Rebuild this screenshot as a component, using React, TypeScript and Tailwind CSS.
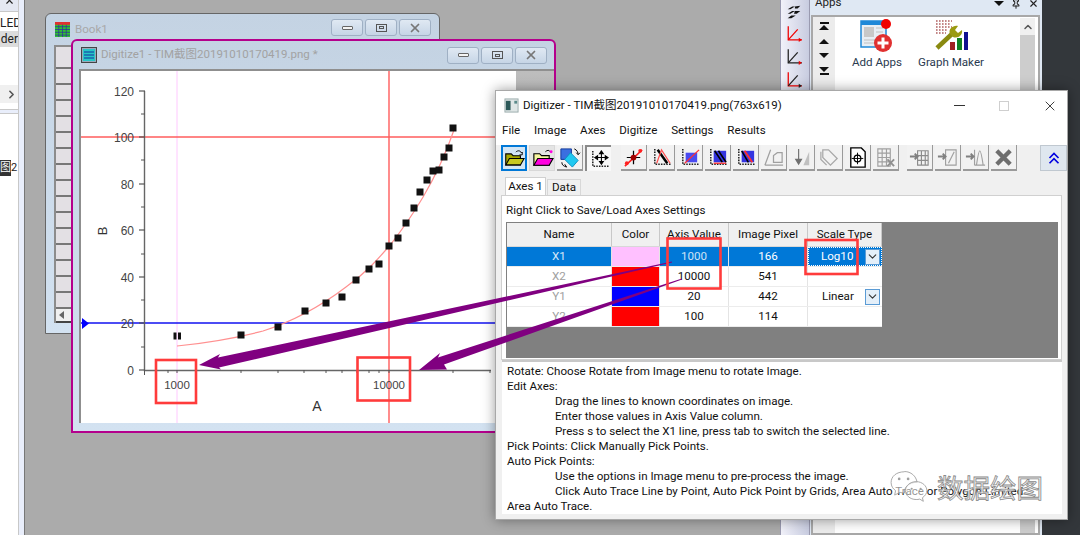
import { ReactNode } from "react";
import { ChevronDown, ChevronRight, ChevronUp, Pin, X } from "lucide-react";

const FONT = "font-['Roboto','Noto_Sans_CJK_SC',sans-serif]";

const POINTS: Array<[number, number]> = [
  [240, 335], [277, 327], [304, 311], [325, 303], [341, 297], [355, 280], [368, 269],
  [378, 264], [388, 246], [397, 238], [405, 223], [413, 208], [419, 192], [426, 180],
  [432, 171], [438, 170], [443, 157], [448, 148], [452, 128],
];
const Y_LABELS: Array<[number, string]> = [
  [91, "120"], [137, "100"], [184, "80"], [230, "60"], [277, "40"], [323, "20"], [370, "0"],
];
const X_TICKS = [167, 176, 240, 277, 303, 325, 341, 356, 368, 378, 388, 452, 489];
const Y_MINOR = [114, 160, 207, 254, 300, 347];

const HELP: Array<{ text: string; indent?: boolean }> = [
  { text: "Rotate: Choose Rotate from Image menu to rotate Image." },
  { text: "Edit Axes:" },
  { text: "Drag the lines to known coordinates on image.", indent: true },
  { text: "Enter those values in Axis Value column.", indent: true },
  { text: "Press s to select the X1 line, press tab to switch the selected line.", indent: true },
  { text: "Pick Points: Click Manually Pick Points." },
  { text: "Auto Pick Points:" },
  { text: "Use the options in Image menu to pre-process the image.", indent: true },
  { text: "Click Auto Trace Line by Point, Auto Pick Point by Grids, Area Auto Trace or Polygon Limited", indent: true },
  { text: "Area Auto Trace." },
];

const ROWS = [
  { name: "X1", color: "bg-[#ffc0ff]", value: "1000", pixel: "166", scale: "Log10", selected: true },
  { name: "X2", color: "bg-[#ff0000]", value: "10000", pixel: "541", scale: "" },
  { name: "Y1", color: "bg-[#0000ff]", value: "20", pixel: "442", scale: "Linear" },
  { name: "Y2", color: "bg-[#ff0000]", value: "100", pixel: "114", scale: "" },
];

function MdiButton({ children }: { children: ReactNode }) {
  return (
    <div className="flex h-[17px] w-[32px] items-center justify-center rounded-[3px] border border-[#9fb0c4] bg-gradient-to-b from-[#e0e9f3] to-[#c6d5e6]">
      {children}
    </div>
  );
}

function MdiButtons() {
  return (
    <div className="flex gap-[2px]">
      <MdiButton>
        <div className="h-[4px] w-[11px] rounded-[1px] border border-[#666] bg-[#f4f4f4]" />
      </MdiButton>
      <MdiButton>
        <div className="flex h-[8px] w-[11px] items-center justify-center border border-[#555]">
          <div className="h-[3px] w-[5px] border border-[#555]" />
        </div>
      </MdiButton>
      <MdiButton>
        <X className="h-[14px] w-[14px] text-[#777]" strokeWidth={3} />
      </MdiButton>
    </div>
  );
}

function Axes({ color = "#222" }: { color?: string }) {
  return <path d="M5 3v16h17" fill="none" stroke={color} strokeWidth="1.6" strokeDasharray="1.6 1.2" />;
}

const ICONS: Record<string, ReactNode> = {
  open: (
    <>
      <path d="M3 19V7h6l2 2h8v10z" fill="#a8a800" stroke="#000" strokeWidth="1.2" />
      <path d="M3 19l4-7h16l-4 7z" fill="#c8c820" stroke="#000" strokeWidth="1.2" />
      <path d="M14 5c2-2 5-2 6 1l1-1v3h-3" fill="none" stroke="#000" />
    </>
  ),
  openPink: (
    <>
      <path d="M3 19V7h6l2 2h8v10z" fill="#f6f6a0" stroke="#000" strokeWidth="1.2" />
      <path d="M3 19l4-7h16l-4 7z" fill="#ff00e0" stroke="#000" strokeWidth="1.2" />
      <path d="M15 5c2-2 4-2 5 0" fill="none" stroke="#000" />
      <circle cx="21" cy="5" r="1.5" fill="#ff00e0" />
    </>
  ),
  rotate: (
    <>
      <path d="M3 3h11v5l-6 6H3z" fill="#3a6fe0" stroke="#123a9a" />
      <path d="M13 7l8 8-6 7-8-8z" fill="#20c8f0" stroke="#0a90c0" />
      <path d="M17 3c3 1 4 4 4 6m0 0l-2-2m2 2l2-2M4 17c0 3 2 4 5 5m0 0l-2-3" fill="none" stroke="#000" />
    </>
  ),
  move: (
    <>
      <Axes />
      <path d="M14 3v14M8 10h12M14 3l-2 3h4zM14 17l-2-3h4zM7 10l3-2v4zM21 10l-3-2v4z" stroke="#000" fill="#000" strokeWidth="1.1" />
    </>
  ),
  point: (
    <>
      <path d="M3 21L21 4" stroke="#ff2020" strokeWidth="1.6" />
      <path d="M12 5v14M5 12h14" stroke="#000" strokeWidth="1.3" />
      <circle cx="12" cy="12" r="3" fill="#a00000" />
      <circle cx="5" cy="18" r="2" fill="#ff2020" />
      <circle cx="19" cy="5" r="2" fill="#ff2020" />
    </>
  ),
  peak: (
    <>
      <Axes />
      <path d="M8 4l10 14" stroke="#000" strokeWidth="2.6" />
      <path d="M7 18L12 4l9 14" fill="none" stroke="#ff5050" strokeWidth="1.3" />
    </>
  ),
  square: (
    <>
      <Axes />
      <rect x="8" y="7" width="12" height="10" fill="#4a4af0" />
      <path d="M7 18L22 4" stroke="#ff3030" strokeWidth="1.3" />
    </>
  ),
  hatch: (
    <>
      <Axes />
      <rect x="8" y="5" width="13" height="12" fill="#3434e0" />
      <path d="M9 5l8 12M13 5l8 12" stroke="#000" strokeWidth="1.6" />
      <path d="M8 18h13" stroke="#ff3030" strokeWidth="1.3" />
    </>
  ),
  hatch2: (
    <>
      <Axes />
      <rect x="8" y="5" width="13" height="12" fill="#3434e0" />
      <path d="M11 5l8 12" stroke="#ff3030" strokeWidth="2" />
      <path d="M8 5l7 12" stroke="#000" strokeWidth="1.6" />
    </>
  ),
  polyGray: (
    <path d="M3 20L9 4M3 20h19M12 17V10l4-3h5v10z" fill="none" stroke="#a0a0a0" strokeWidth="1.3" />
  ),
  downGray: (
    <>
      <path d="M9 3v15M6 14l3 5 3-5z" stroke="#707070" fill="#707070" strokeWidth="1.2" />
      <path d="M14 20L20 6v14z" fill="#c0c0c0" />
    </>
  ),
  tagGray: (
    <path d="M5 4h6l9 9-7 7-8-8zM3 6v8l6 6" fill="none" stroke="#a8a8a8" strokeWidth="1.3" />
  ),
  target: (
    <>
      <path d="M5 2h11l4 4v16H5z" fill="#fff" stroke="#000" strokeWidth="1.4" />
      <circle cx="12" cy="13" r="3.5" fill="none" stroke="#000" strokeWidth="1.3" />
      <path d="M12 7v12M6 13h12" stroke="#000" />
    </>
  ),
  gridX: (
    <>
      <path d="M4 3h13v18H4zM4 7.500h13M4 12h13M4 16.500h13M8.500 3v18M13 3v18" fill="none" stroke="#a0a0a0" strokeWidth="1.2" />
      <path d="M14 14l7 7m0-7l-7 7" stroke="#909090" strokeWidth="2" />
    </>
  ),
  tableIn: (
    <>
      <path d="M10 5h11v15H10zM10 10h11M10 15h11M14 5v15M18 5v15" fill="none" stroke="#8c8c8c" strokeWidth="1.2" />
      <path d="M2 11h8M7 8l3 3-3 3" fill="none" stroke="#808080" strokeWidth="2" />
    </>
  ),
  lineIn: (
    <>
      <path d="M10 4h11v16H10z" fill="none" stroke="#a0a0a0" strokeWidth="1.2" />
      <path d="M13 18l6-12" stroke="#a0a0a0" strokeWidth="1.2" />
      <path d="M2 11h8M7 8l3 3-3 3" fill="none" stroke="#808080" strokeWidth="2" />
    </>
  ),
  peakIn: (
    <>
      <path d="M11 20V4M11 20h11M13 20c3-20 4-20 7 0" fill="none" stroke="#a0a0a0" strokeWidth="1.2" />
      <path d="M2 11h8M7 8l3 3-3 3" fill="none" stroke="#808080" strokeWidth="2" />
    </>
  ),
  cross: <path d="M5 5l14 14m0-14L5 19" stroke="#6e6e6e" strokeWidth="4.500" />,
  up: <path d="M6 12l6-6 6 6M6 19l6-6 6 6" fill="none" stroke="#0000e0" strokeWidth="2.2" />,
};

function ToolButton({ icon, state }: { icon: string; state?: "focus" | "down" | "flat" }) {
  let frame = "border-b-2 border-r border-[#9a9a9a] bg-[#f2f2f2]";
  if (state === "focus") frame = "border-2 border-[#0078d7] bg-[#d4e6f5]";
  if (state === "down") frame = "border border-[#d8d8d8] bg-[#e4e4e4]";
  if (state === "flat") frame = "border-l-2 border-t-2 border-[#8a8a8a] bg-[#f8f8f8]";
  return (
    <div className={`flex h-[26px] w-[26px] shrink-0 items-center justify-center ${frame}`}>
      <svg viewBox="0 0 24 24" className="h-[23px] w-[23px]">
        {ICONS[icon]}
      </svg>
    </div>
  );
}

function Toolbar() {
  const first = ["point", "peak", "square", "hatch", "hatch2", "polyGray", "downGray", "tagGray", "target", "gridX"];
  const second = ["tableIn", "lineIn", "peakIn", "cross"];
  return (
    <div className="flex h-[26px] items-center pl-[5px]">
      <div className="flex gap-[2px]">
        <ToolButton icon="open" state="focus" />
        <ToolButton icon="openPink" state="down" />
        <ToolButton icon="rotate" />
        <ToolButton icon="move" state="flat" />
      </div>
      <div className="ml-[10px] flex gap-[2px]">
        {first.map((icon) => (
          <ToolButton key={icon} icon={icon} />
        ))}
      </div>
      <div className="ml-[8px] flex gap-[2px]">
        {second.map((icon) => (
          <ToolButton key={icon} icon={icon} />
        ))}
      </div>
      <div className="ml-[23px] flex h-[26px] w-[28px] items-center justify-center border border-[#c0c8d0] bg-[#dfe7ef]">
        <svg viewBox="0 0 24 24" className="h-[18px] w-[18px]">
          {ICONS.up}
        </svg>
      </div>
    </div>
  );
}

function Combo() {
  return (
    <div className="flex h-[16px] w-[15px] items-center justify-center border border-[#5a9bd5] bg-[#e4eff9]">
      <ChevronDown className="h-[13px] w-[13px] text-[#333]" strokeWidth={2} />
    </div>
  );
}

function AxesTable() {
  const cell = "flex items-center justify-center border-r border-[#e4e4e4]";
  return (
    <div className="w-[375px] bg-white text-[11.6px] text-[#111]">
      <div className="grid h-[24px] grid-cols-[105px_48px_69px_79px_74px] border-b border-[#d8d8d8] bg-[#f0f0f0]">
        {["Name", "Color", "Axis Value", "Image Pixel", "Scale Type"].map((h) => (
          <div key={h} className="flex items-center justify-center border-r border-[#c8c8c8]">
            {h}
          </div>
        ))}
      </div>
      {ROWS.map((row) => (
        <div
          key={row.name}
          className={`grid h-[20px] grid-cols-[105px_48px_69px_79px_74px] border-b border-[#ececec] ${row.selected ? "bg-[#0078d7] text-white" : ""}`}
        >
          <div className={`${cell} ${row.selected ? "text-[#d8e8f8]" : "text-[#a0a0a0]"}`}>{row.name}</div>
          <div className={`${cell} ${row.color}`} />
          <div className={`${cell} ${row.selected ? "text-[#cfe3f5]" : ""}`}>{row.value}</div>
          <div className={cell}>{row.pixel}</div>
          {row.selected ? (
            <div className="flex items-center justify-between border border-dotted border-[#fff] pl-[12px] pr-[1px]">
              <span>{row.scale}</span>
              <Combo />
            </div>
          ) : (
            <div className="flex items-center justify-between pl-[14px] pr-[2px]">
              <span>{row.scale}</span>
              {row.scale && <Combo />}
            </div>
          )}
        </div>
      ))}
    </div>
  );
}

function Digitizer() {
  return (
    <div className={`absolute left-[495px] top-[90px] flex h-[430px] w-[573px] flex-col border border-[#a8a8a8] bg-[#f0f0f0] shadow-[0_0_12px_rgba(0,0,0,0.4)] ${FONT}`}>
      <div className="flex h-[29px] shrink-0 items-center bg-white pl-[8px] text-[11.5px] text-[#111]">
        <svg viewBox="0 0 16 16" className="h-[15px] w-[15px]">
          <rect x="1" y="1" width="14" height="14" fill="#dfe6e6" stroke="#9aa" />
          <rect x="2" y="3" width="5" height="10" fill="#2d5a5a" />
          <rect x="11" y="3" width="3" height="3" fill="#5a8a8a" />
        </svg>
        <span className="ml-[4px]">Digitizer - TIM截图20191010170419.png(763x619)</span>
        <div className="ml-auto flex items-center">
          <div className="h-px w-[11px] bg-[#333]" />
          <div className="ml-[34px] h-[10px] w-[10px] border border-[#cfcfcf]" />
          <X className="ml-[33px] mr-[9px] h-[16px] w-[16px] text-[#222]" strokeWidth={1.3} />
        </div>
      </div>
      <div className="flex h-[25px] shrink-0 items-start gap-[13.8px] bg-white pl-[6px] pt-[2px] text-[11.6px] text-[#111]">
        {["File", "Image", "Axes", "Digitize", "Settings", "Results"].map((m) => (
          <span key={m}>{m}</span>
        ))}
      </div>
      <Toolbar />
      <div className="ml-[9px] mt-[7px] flex h-[17px] items-end text-[11.6px] text-[#111]">
        <div className="z-10 flex h-[18px] w-[41px] items-center justify-center border border-b-0 border-[#d0d0d0] bg-white">Axes 1</div>
        <div className="ml-[1px] flex h-[16px] w-[34px] items-center justify-center border border-b-0 border-[#d8d8d8] bg-[#f0f0f0]">Data</div>
      </div>
      <div className="ml-[5px] mr-[5px] flex h-[168px] flex-col border border-[#d0d0d0] bg-white pl-[4px] pr-[3px]">
        <div className="h-[26px] pt-[7px] text-[11.6px] leading-[15px] text-[#111]">Right Click to Save/Load Axes Settings</div>
        <div className="h-[136px] bg-[#808080] pl-px pt-px">
          <AxesTable />
        </div>
      </div>
      <div className="ml-[6px] mr-[5px] flex-1 border-t-2 border-[#c8c8c8] bg-white pl-[5px] pt-[2px] text-[11.6px] leading-[15px] text-[#111]">
        {HELP.map((line) => (
          <div key={line.text} className={`whitespace-nowrap ${line.indent ? "pl-[48px]" : ""}`}>
            {line.text}
          </div>
        ))}
      </div>
      <div className="h-[5px] shrink-0" />
    </div>
  );
}

function Plot() {
  return (
    <svg viewBox="80 71 435 352" className="h-[352px] w-[435px] shrink-0 bg-white font-['Liberation_Sans',sans-serif]">
      <path d="M176 71v352" stroke="#ffc8ff" strokeWidth="1" />
      <path d="M388 71v352" stroke="#ff5c5c" strokeWidth="1.4" />
      <path d="M80 137h435" stroke="#ff5c5c" strokeWidth="1.4" />
      <path d="M80 323h415" stroke="#1010f0" strokeWidth="1.3" />
      <path d="M81 318l7 5.500-7 5.500z" fill="#0000ff" />
      <path d="M143.500 91v279.500H490" fill="none" stroke="#666" strokeWidth="1.4" />
      {Y_LABELS.map(([y, label]) => (
        <g key={label}>
          <path d={`M138 ${y}h6`} stroke="#555" strokeWidth="1.2" />
          <text x="133" y={y + 4.500} textAnchor="end" fontSize="12" fill="#444">
            {label}
          </text>
        </g>
      ))}
      {Y_MINOR.map((y) => (
        <path key={y} d={`M140 ${y}h4`} stroke="#555" />
      ))}
      {X_TICKS.map((x) => (
        <path key={x} d={`M${x} 370v3`} stroke="#555" />
      ))}
      <path d="M143.500 370v5" stroke="#555" />
      <text x="176" y="389" textAnchor="middle" fontSize="11.500" fill="#444">1000</text>
      <text x="388" y="389" textAnchor="middle" fontSize="11.500" fill="#444">10000</text>
      <text x="316" y="411" textAnchor="middle" fontSize="14" fill="#333">A</text>
      <text x="106" y="231" textAnchor="middle" fontSize="13" fill="#333" transform="rotate(-90 106 231)">B</text>
      <path
        d="M176 346C205 343 235 338 262 331C290 322 320 306 345 287C365 273 378 258 390 244C410 218 435 182 453 130"
        fill="none"
        stroke="#ff9090"
        strokeWidth="1.2"
      />
      <rect x="172.500" y="332.500" width="3" height="7" fill="#111" />
      <rect x="177" y="332.500" width="3" height="7" fill="#111" />
      {POINTS.map(([x, y]) => (
        <rect key={`${x}-${y}`} x={x - 3.5} y={y - 3.5} width="7" height="7" fill="#111" />
      ))}
    </svg>
  );
}

function DigitizeWindow() {
  return (
    <div className={`absolute left-[71px] top-[39px] flex h-[394px] w-[485px] flex-col rounded-t-[6px] border-2 border-[#b4008c] bg-gradient-to-b from-[#c4d3e3] to-[#d3e2f1] ${FONT}`}>
      <div className="flex h-[28px] shrink-0 items-center pl-[8px] pr-[7px]">
        <svg viewBox="0 0 16 16" className="h-[16px] w-[16px]">
          <rect x="0.500" y="0.500" width="15" height="15" fill="#9ab" stroke="#444" />
          <rect x="2" y="2" width="12" height="12" fill="#26c6c6" />
          <path d="M3 5h10M3 8h10M3 11h10" stroke="#1030a0" />
        </svg>
        <span className="ml-[4px] text-[11.5px] text-[#a2a2a2]">Digitize1 - TIM截图20191010170419.png *</span>
        <div className="ml-auto">
          <MdiButtons />
        </div>
      </div>
      <div className="ml-[6px] flex h-[354px] border-l-2 border-t-2 border-[#8f8f8f]">
        <Plot />
        <div className="flex-1 bg-gradient-to-b from-[#bdbdbd] to-[#ababab]" />
      </div>
    </div>
  );
}

function BookWindow() {
  return (
    <div className={`absolute left-[45px] top-[13px] h-[321px] w-[395px] rounded-t-[6px] border border-[#666] bg-gradient-to-b from-[#c4d3e3] to-[#d3e2f1] ${FONT}`}>
      <div className="flex h-[31px] items-center pl-[9px] pr-[8px]">
        <svg viewBox="0 0 16 16" className="h-[15px] w-[15px]">
          <rect width="16" height="16" fill="#30c030" />
          <path d="M0 5h16M0 8h16M0 11h16M0 14h16M4 0v16M8 0v16M12 0v16" stroke="#3030a0" strokeWidth="0.8" />
          <rect width="16" height="3" fill="#e03030" />
        </svg>
        <span className="ml-[5px] text-[11.6px] text-[#a8a8a8]">Book1</span>
        <div className="ml-auto mb-[4px]">
          <MdiButtons />
        </div>
      </div>
      <div className="ml-[8px] w-[18px] border-l-2 border-t-2 border-[#8c8c8c]">
        <div className="h-[22px] border-b-2 border-[#777] bg-[#e3e0e4]" />
        {Array.from({ length: 15 }, (_, i) => (
          <div key={i} className="h-[16px] border-b-2 border-[#777] bg-[#e3e0e4]" />
        ))}
        <div className="flex h-[14px] items-center border-b-2 border-[#444] bg-[#f0f0f0] pl-[3px]">
          <div className="h-0 w-0 border-y-[4px] border-r-[5px] border-y-transparent border-r-[#666]" />
        </div>
      </div>
    </div>
  );
}

function LeftPanels() {
  return (
    <div className={`absolute left-0 top-0 flex h-[535px] w-[25px] border-r border-[#777] bg-[#e9eefb] ${FONT}`}>
      <div className="flex h-full w-[19px] flex-col overflow-hidden border-r border-[#c8c8c8] text-[12px] leading-[16px] text-[#222]">
        <div className="flex h-[11px] items-end justify-end overflow-hidden bg-[#e4e8f2] pr-[3px]">
          <X className="mb-[5px] h-[11px] w-[11px] shrink-0 text-[#222]" strokeWidth={2.5} />
        </div>
        <div className="h-[99px] border-y border-[#c8c8c8] bg-white">
          <div className="whitespace-nowrap pt-[3px] text-right">LED</div>
          <div className="bg-[#dcdcdc] text-right">der</div>
          <div className="mt-[38px] flex h-[18px] items-center justify-end bg-[#f0f0f0]">
            <ChevronRight className="h-[13px] w-[13px] text-[#555]" strokeWidth={3} />
          </div>
        </div>
        <div className="mt-[3px] flex-1 border-t border-[#c8c8c8] bg-white pt-[46px]">
          <div className="flex items-center whitespace-nowrap text-[11px]">
            <span className="bg-[#333] text-white">图</span>
            <span>2</span>
          </div>
        </div>
      </div>
    </div>
  );
}

function AppsPanel() {
  return (
    <div className={`absolute left-[780px] top-0 flex h-[535px] w-[262px] bg-[#dfe8f3] ${FONT}`}>
      <div className="flex w-[30px] flex-col items-center gap-[2px] border-x border-[#9a9ab0] bg-gradient-to-r from-[#f2f2fa] to-[#c8cce0] pr-[3px] pt-[3px]">
        <svg viewBox="0 0 20 20" className="h-[18px] w-[18px]">
          <path d="M3 7l5-3h3l-5 3zM11 4l6-1-3 3h-3zM3 12l5-3h3l-5 3zM11 9h6l-4 3h-3zM3 17l4-3h5l-5 3z" fill="#111" />
        </svg>
        {["#f00000", "#111", "#f00000"].map((c, i) => (
          <svg key={i} viewBox="0 0 20 20" className="h-[21px] w-[21px]">
            <path d="M5 3v13h13" fill="none" stroke={i === 1 ? "#222" : c} strokeWidth="1.2" />
            <path d="M5 16L14 6" stroke={i === 0 ? "#f00000" : "#222"} strokeWidth="1.2" />
            <path d="M15 14l3 2-3 2z" fill={i === 2 ? "#222" : "#f00000"} />
          </svg>
        ))}
      </div>
      <div className="flex-1 overflow-hidden">
        <div className="relative h-[15px] overflow-hidden pl-[5px] text-[11.6px] leading-[10px] text-[#222]">
          <span className="block -translate-y-[3px]">Apps</span>
          <div className="absolute right-[3px] top-[-2px] flex items-center gap-[7px] text-[#222]">
            <div className="h-0 w-0 border-x-[5px] border-t-[5px] border-x-transparent border-t-[#111]" />
            <Pin className="h-[10px] w-[10px]" strokeWidth={2.5} />
            <X className="h-[11px] w-[11px]" strokeWidth={2.5} />
          </div>
        </div>
        <div className="ml-[1px] mr-[2px] flex h-[520px] border-2 border-[#a8a8a8] bg-white">
          <div className="flex w-[22px] flex-col items-center gap-[9px] bg-[#ececec] pt-[5px]">
            <div className="flex flex-col items-center">
              <div className="h-[2px] w-[9px] bg-[#111]" />
              <div className="mt-px h-0 w-0 border-x-[5px] border-b-[5px] border-x-transparent border-b-[#111]" />
            </div>
            <div className="h-0 w-0 border-x-[5px] border-b-[5px] border-x-transparent border-b-[#111]" />
            <div className="h-0 w-0 border-x-[5px] border-t-[5px] border-x-transparent border-t-[#111]" />
            <div className="flex flex-col items-center">
              <div className="h-0 w-0 border-x-[5px] border-t-[5px] border-x-transparent border-t-[#111]" />
              <div className="mt-px h-[2px] w-[9px] bg-[#111]" />
            </div>
          </div>
          <div className="flex flex-1 gap-[10px] pl-[12px] pt-[1px] text-[11.6px] text-[#2a3a50]">
            <div className="flex w-[60px] flex-col items-center">
              <svg viewBox="0 0 36 34" className="h-[34px] w-[36px]">
                <rect x="2" y="3" width="25" height="26" fill="#e8eef4" stroke="#1e88d8" strokeWidth="1.5" />
                <rect x="2" y="3" width="25" height="4" fill="#1e88d8" />
                <rect x="5" y="9" width="10" height="10" fill="#c8c8c8" />
                <path d="M17 10h7M17 14h7M5 22h18M5 25h18" stroke="#c0c0c0" />
                <circle cx="27" cy="6" r="5" fill="#f00000" />
                <circle cx="24" cy="25" r="9" fill="#e03030" />
                <path d="M24 19.500v11M18.500 25h11" stroke="#fff" strokeWidth="3" />
              </svg>
              <span className="mt-[2px] whitespace-nowrap">Add Apps</span>
            </div>
            <div className="flex w-[68px] flex-col items-center">
              <svg viewBox="0 0 36 34" className="h-[34px] w-[36px]">
                <path d="M3 3h16M3 6h14M3 9h16M3 12h12M3 15h10" stroke="#b06060" strokeWidth="1.6" strokeDasharray="1.6 1.4" />
                <path d="M4 30L20 15" stroke="#8a8a10" strokeWidth="4.500" />
                <path d="M17 16c-2-5 3-9 8-8l-3 4 3 3 4-3c1 5-4 9-9 7" fill="#9a9a10" />
                <rect x="17" y="24" width="5" height="8" fill="#a02020" />
                <rect x="24" y="20" width="5" height="12" fill="#108020" />
                <rect x="31" y="14" width="4" height="18" fill="#101090" />
              </svg>
              <span className="mt-[2px] whitespace-nowrap">Graph Maker</span>
            </div>
            <div className="ml-auto mr-[3px] flex w-[15px] flex-col">
              <div className="flex h-[17px] items-center justify-center bg-[#f0f0f0]">
                <ChevronUp className="h-[12px] w-[12px] text-[#555]" strokeWidth={3} />
              </div>
              <div className="flex-1 bg-[#cdcdcd]" />
            </div>
          </div>
        </div>
      </div>
    </div>
  );
}

function Annotations() {
  return (
    <svg viewBox="0 0 1080 535" className="pointer-events-none absolute inset-0 h-[535px] w-[1080px]">
      <polygon points="199,365 220,354 218,357.500 672,261.500 672,262.500 219,367.500 221,369.500" fill="#800080" />
      <polygon points="419,370 440,353 438,357.500 682,278.500 682,279.500 444,364.500 447,369.500" fill="#800080" />
      <g fill="none" stroke="#ff3b3b" strokeWidth="2.600">
        <rect x="156" y="360" width="40" height="43" />
        <rect x="357.500" y="357.500" width="52.500" height="43" />
        <rect x="667.500" y="238.500" width="53" height="50" />
        <rect x="805.500" y="240" width="52" height="34" />
      </g>
    </svg>
  );
}

function Watermark() {
  return (
    <div className="pointer-events-none absolute left-[888px] top-[470px] flex items-center">
      <svg viewBox="0 0 44 38" className="h-[34px] w-[42px]">
        <g fill="#ffffff" fillOpacity="0.55" stroke="#a0a0a0" strokeWidth="1">
          <path d="M17 2C8 2 2 7 2 14c0 4 2 7 5 9l-1 5 6-3c2 .5 3 .7 5 .7-1-6 5-12 14-12-1-7-7-12-14-12z" />
          <path d="M30 13c-7 0-12 5-12 10s5 10 12 10c1 0 3 0 4-.5l4 2.500-1-4c3-2 5-5 5-8 0-5-5-10-12-10z" />
        </g>
        <g fill="#a0a0a0">
          <circle cx="11" cy="10" r="1.500" />
          <circle cx="21" cy="10" r="1.500" />
          <circle cx="25" cy="21" r="1.200" />
          <circle cx="35" cy="21" r="1.200" />
        </g>
      </svg>
      <span className="ml-[7px] font-['Noto_Sans_CJK_SC',sans-serif] text-[26.500px] leading-none text-[#f4f4f4] [-webkit-text-stroke:0.8px_#8a8a8a]">
        数据绘图
      </span>
    </div>
  );
}

export default function App() {
  return (
    <div className="relative h-[535px] w-[1080px] overflow-hidden bg-[#ababab]">
      <div className="absolute right-0 top-0 h-[535px] w-[38px] bg-[#33373b]" />
      <LeftPanels />
      <AppsPanel />
      <BookWindow />
      <DigitizeWindow />
      <Digitizer />
      <Annotations />
      <Watermark />
    </div>
  );
}
